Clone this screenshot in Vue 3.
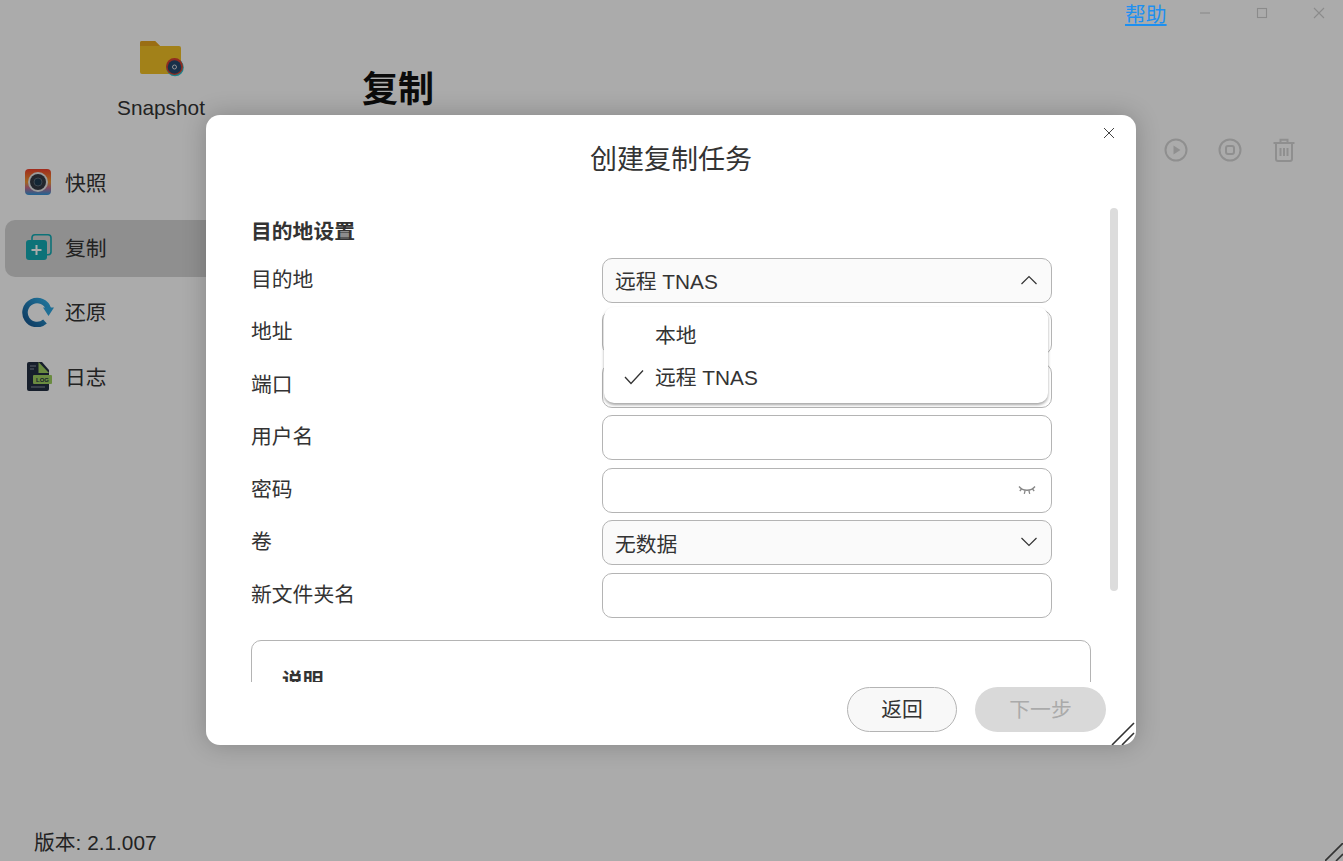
<script setup>
const navItems = [
  { key: 'snap', label: '快照' },
  { key: 'copy', label: '复制', active: true },
  { key: 'restore', label: '还原' },
  { key: 'log', label: '日志' }
]
const rows = [
  { label: '目的地', type: 'select-open', value: '远程 TNAS' },
  { label: '地址', type: 'input' },
  { label: '端口', type: 'input' },
  { label: '用户名', type: 'input' },
  { label: '密码', type: 'password' },
  { label: '卷', type: 'select', value: '无数据' },
  { label: '新文件夹名', type: 'input' }
]
</script>

<template>
  <div class="app">
    <aside class="sidebar">
      <div class="brand">
        <svg class="brand-icon" width="48" height="42" viewBox="0 0 48 42">
          <path d="M3 4a2 2 0 0 1 2-2h13l5 5h19a2 2 0 0 1 2 2v24a2 2 0 0 1-2 2H5a2 2 0 0 1-2-2z" fill="#f2c126" />
          <path d="M3 4a2 2 0 0 1 2-2h13l5 5H3z" fill="#e6a51f" />
          <circle cx="38" cy="28.500" r="8.800" fill="#2fc4d0" />
          <circle cx="37.500" cy="27.500" r="8.500" fill="#d8402f" />
          <circle cx="37.500" cy="28" r="6.800" fill="#24486e" />
          <circle cx="37.500" cy="28" r="2" fill="none" stroke="#ddd" stroke-width="1" />
        </svg>
        <div class="brand-name">Snapshot</div>
      </div>
      <nav class="nav">
        <div v-for="item in navItems" :key="item.key" class="nav-item" :class="{ active: item.active }">
          <span class="nav-icon">
            <svg v-if="item.key === 'snap'" width="28" height="28" viewBox="0 0 28 28">
              <defs>
                <linearGradient id="snapg" x1="0" y1="0" x2="0" y2="1">
                  <stop offset="0" stop-color="#f0402c" />
                  <stop offset=".5" stop-color="#f29a32" />
                  <stop offset=".72" stop-color="#c46d8c" />
                  <stop offset="1" stop-color="#2f96dc" />
                </linearGradient>
              </defs>
              <rect x="1" y="1" width="26" height="26" rx="4" fill="url(#snapg)" />
              <circle cx="14" cy="14" r="10" fill="#e6e6e6" />
              <circle cx="14" cy="14" r="8" fill="#333a44" />
              <circle cx="14" cy="14" r="4" fill="#1d3a50" stroke="#5a6a76" stroke-width="1" />
            </svg>
            <svg v-else-if="item.key === 'copy'" width="28" height="28" viewBox="0 0 28 28">
              <rect x="8" y="1.800" width="19" height="20" rx="3" fill="none" stroke="#14aab3" stroke-width="1.600" />
              <rect x="2" y="7" width="21" height="20" rx="3" fill="#14aab3" />
              <path d="M12.500 12v10M7.500 17h10" stroke="#fff" stroke-width="2" />
            </svg>
            <svg v-else-if="item.key === 'restore'" class="restore" width="34" height="32" viewBox="0 0 34 32">
              <defs>
                <linearGradient id="restg" x1="0" y1="1" x2="1" y2="0">
                  <stop offset="0" stop-color="#16568f" />
                  <stop offset="1" stop-color="#30aee8" />
                </linearGradient>
              </defs>
              <path d="M24 26.500A12 12 0 1 1 27.500 14" fill="none" stroke="url(#restg)" stroke-width="5.500" />
              <path d="M22 12.500h11l-5.500 8.500z" fill="#2ea4de" />
            </svg>
            <svg v-else width="28" height="32" viewBox="0 0 28 32">
              <path d="M3 4a2 2 0 0 1 2-2h13l7 8v19a2 2 0 0 1-2 2H5a2 2 0 0 1-2-2z" fill="#232f42" />
              <path d="M14.500 2l10.500 11h-10.500z" fill="#9fd060" />
              <rect x="9" y="15" width="19" height="9" rx="1" fill="#9fd060" />
              <text x="18.500" y="22" class="log-text">LOG</text>
              <path d="M6 6h6M6 9h4M7 27h14" stroke="#8a93a0" stroke-width="1" />
            </svg>
          </span>
          <span>{{ item.label }}</span>
        </div>
      </nav>
      <div class="version">版本: 2.1.007</div>
    </aside>

    <main class="main">
      <h1 class="page-title">复制</h1>
      <div class="toolbar">
        <svg width="24" height="24" viewBox="0 0 24 24">
          <circle cx="12" cy="12" r="10.500" class="tool" />
          <path d="M9.500 7.500l7 4.500-7 4.500z" class="tool-fill" />
        </svg>
        <svg width="24" height="24" viewBox="0 0 24 24">
          <circle cx="12" cy="12" r="10.500" class="tool" />
          <rect x="8" y="8" width="8" height="8" rx="2" class="tool" />
        </svg>
        <svg width="24" height="24" viewBox="0 0 24 24">
          <path d="M1.500 5h21M8.500 5V1.800h7V5M4 5v16a2 2 0 0 0 2 2h12a2 2 0 0 0 2-2V5M8.500 10v8M12 10v8M15.500 10v8" class="tool" />
        </svg>
      </div>
    </main>

    <div class="win-controls">
      <svg width="12" height="12" viewBox="0 0 12 12"><path d="M1 6h10" class="win" /></svg>
      <svg width="12" height="12" viewBox="0 0 12 12"><rect x="1.500" y="1.500" width="9" height="9" class="win" /></svg>
      <svg width="12" height="12" viewBox="0 0 12 12"><path d="M1 1l10 10M11 1L1 11" class="win" /></svg>
    </div>

    <div class="overlay">
      <section class="dialog">
        <header class="dialog-head">
          <h2 class="dialog-title">创建复制任务</h2>
          <svg class="dialog-close" width="12" height="12" viewBox="0 0 12 12">
            <path d="M1 1l10 10M11 1L1 11" fill="none" stroke="#444" stroke-width="1" />
          </svg>
        </header>

        <div class="dialog-body">
          <div class="section-title">目的地设置</div>
          <div class="form">
            <div v-for="row in rows" :key="row.label" class="form-row">
              <label class="form-label">{{ row.label }}</label>
              <div class="control" :class="{ 'is-select': row.type.startsWith('select') }">
                <span v-if="row.value">{{ row.value }}</span>
                <svg v-if="row.type === 'select-open'" class="chev" width="18" height="10" viewBox="0 0 18 10">
                  <path d="M1.500 9L9 1.500 16.500 9" fill="none" stroke="#333" stroke-width="1.200" />
                </svg>
                <svg v-if="row.type === 'select'" class="chev" width="18" height="10" viewBox="0 0 18 10">
                  <path d="M1.500 1L9 8.500 16.500 1" fill="none" stroke="#333" stroke-width="1.200" />
                </svg>
                <svg v-if="row.type === 'password'" class="eye" width="18" height="10" viewBox="0 0 18 10">
                  <path d="M1 1.500c4 5 12 5 16 0M3.500 4L1.800 6M7 5.800L6.300 8.800M11 5.800l.7 3M14.500 4l1.700 2" fill="none" stroke="#888" stroke-width="1.300" />
                </svg>
                <div v-if="row.type === 'select-open'" class="menu">
                  <div class="menu-item">本地</div>
                  <div class="menu-item">
                    <svg class="check" width="20" height="16" viewBox="0 0 20 16">
                      <path d="M1 8l6 6.500L19 1.500" fill="none" stroke="#333" stroke-width="1.300" />
                    </svg>
                    远程 TNAS
                  </div>
                </div>
              </div>
            </div>
          </div>
          <div class="notice">
            <div class="notice-title">说明</div>
          </div>
          <div class="scroll-thumb"></div>
        </div>

        <footer class="dialog-foot">
          <button class="btn">返回</button>
          <button class="btn primary" disabled>下一步</button>
        </footer>

        <svg class="hatch" width="26" height="26" viewBox="0 0 26 26">
          <path d="M2 26L24 4M12 26L24 14" stroke="#333" stroke-width="1.600" />
        </svg>
      </section>
    </div>

    <a class="help">帮助</a>
    <svg class="hatch" width="18" height="18" viewBox="0 0 18 18">
      <path d="M0 18L18 0M11 18L18 11" stroke="#333" stroke-width="1.600" />
    </svg>
  </div>
</template>

<style>
html, body { margin: 0; padding: 0; }
</style>

<style scoped>
.app {
  position: relative;
  display: flex;
  width: 100vw;
  height: 100vh;
  overflow: hidden;
  background: #fff;
  color: #222;
  font-family: "Liberation Sans", "Noto Sans CJK SC", sans-serif;
  font-size: 20.800px;
}
.sidebar {
  width: 350px;
  flex: none;
  display: flex;
  flex-direction: column;
  padding-left: 5px;
  box-sizing: border-box;
}
.brand {
  margin-left: -5px;
  width: 322px;
  display: flex;
  flex-direction: column;
  align-items: center;
  padding-top: 39px;
}
.brand-icon { display: block; }
.brand-name { margin-top: 15px; line-height: 24px; color: #333; }
.nav {
  margin-top: 35px;
  display: flex;
  flex-direction: column;
  gap: 7.500px;
}
.nav-item {
  height: 57px;
  display: flex;
  align-items: center;
  border-radius: 10px;
  padding-bottom: 3px;
  box-sizing: border-box;
  color: #333;
}
.nav-item.active { background: #d6d6d6; }
.nav-icon {
  width: 60px;
  height: 32px;
  display: flex;
  align-items: center;
  padding-left: 19px;
  box-sizing: border-box;
}
.restore { margin-left: -3px; }
.log-text {
  font-family: "Liberation Sans", sans-serif;
  font-size: 6px;
  font-weight: 700;
  text-anchor: middle;
  fill: #232f42;
}
.version {
  margin-top: auto;
  padding: 0 0 6px 29px;
  line-height: 24px;
  color: #333;
}
.main {
  flex: 1;
  display: flex;
  flex-direction: column;
  padding-left: 12px;
}
.page-title {
  margin: 69px 0 0;
  font-size: 36px;
  line-height: 42px;
  font-weight: 700;
  color: #111;
}
.toolbar {
  align-self: flex-end;
  margin: 27px 47px 0 0;
  display: flex;
  gap: 30px;
}
.tool { fill: none; stroke: #d6d6d6; stroke-width: 2; }
.tool-fill { fill: #d6d6d6; }
.win-controls {
  position: absolute;
  top: 7px;
  right: 18px;
  display: flex;
  gap: 45px;
}
.win { fill: none; stroke: #cfcfcf; stroke-width: 1.100; }
.overlay {
  position: absolute;
  inset: 0;
  display: flex;
  align-items: flex-start;
  justify-content: flex-start;
  padding: 115px 0 0 206px;
  background: rgba(0, 0, 0, 0.33);
}
.dialog {
  position: relative;
  width: 930px;
  height: 630px;
  display: flex;
  flex-direction: column;
  background: #fff;
  border-radius: 14px;
  box-shadow: 0 0 24px rgba(0, 0, 0, 0.22);
}
.dialog-head {
  position: relative;
  height: 88px;
  flex: none;
  box-sizing: border-box;
  padding-top: 27px;
  text-align: center;
}
.dialog-title {
  margin: 0;
  font-size: 27px;
  line-height: 36px;
  font-weight: 400;
  color: #333;
}
.dialog-close {
  position: absolute;
  top: 12px;
  right: 21px;
}
.dialog-body {
  position: relative;
  flex: 1;
  min-height: 0;
  overflow: hidden;
  padding: 17px 45px 0;
}
.section-title {
  font-weight: 700;
  line-height: 24px;
  color: #333;
  margin-bottom: 13.900px;
}
.form {
  display: flex;
  flex-direction: column;
  gap: 7.500px;
}
.form-row {
  display: flex;
  height: 45px;
}
.form-label {
  width: 351px;
  flex: none;
  line-height: 44px;
  color: #333;
}
.control {
  position: relative;
  width: 450px;
  height: 45px;
  box-sizing: border-box;
  border: 1px solid #b4b4b4;
  border-radius: 10px;
  background: #fff;
  display: flex;
  align-items: center;
  justify-content: space-between;
  padding: 0 13px 0 12px;
  color: #333;
}
.control.is-select { background: #fafafa; }
.eye { margin: -1px 2px 0 auto; }
.chev { margin-top: -1px; }
.menu {
  position: absolute;
  top: 48px;
  left: 1px;
  width: 444px;
  height: 96px;
  box-sizing: border-box;
  padding-top: 8px;
  background: #fff;
  border-radius: 10px;
  box-shadow: 0 2px 3px rgba(0, 0, 0, 0.35);
  z-index: 2;
}
.menu-item {
  position: relative;
  height: 42px;
  line-height: 42px;
  padding-left: 51px;
  color: #333;
}
.check { position: absolute; left: 20px; top: 12px; }
.notice {
  margin-top: 22px;
  width: 840px;
  height: 120px;
  box-sizing: border-box;
  border: 1px solid #b4b4b4;
  border-radius: 10px;
  padding: 28px 30px;
}
.notice-title { font-weight: 700; line-height: 24px; color: #333; }
.scroll-thumb {
  position: absolute;
  top: 5px;
  right: 18px;
  width: 8px;
  height: 383px;
  border-radius: 4px;
  background: #dcdcdc;
}
.dialog-foot {
  height: 63px;
  flex: none;
  box-sizing: border-box;
  padding: 5px 30px 0 0;
  display: flex;
  justify-content: flex-end;
  gap: 18px;
}
.btn {
  height: 45px;
  width: 110px;
  box-sizing: border-box;
  padding: 0 0 3px;
  border: 1px solid #b4b4b4;
  border-radius: 23px;
  background: #f8f8f8;
  font: inherit;
  color: #333;
}
.btn.primary {
  width: 131px;
  border: none;
  background: #d9d9d9;
  color: #aaa;
}
.hatch {
  position: absolute;
  right: 0;
  bottom: 0;
}
.help {
  position: absolute;
  top: 1px;
  left: 1125px;
  line-height: 28px;
  color: #1e90f0;
  text-decoration: underline;
}
</style>
